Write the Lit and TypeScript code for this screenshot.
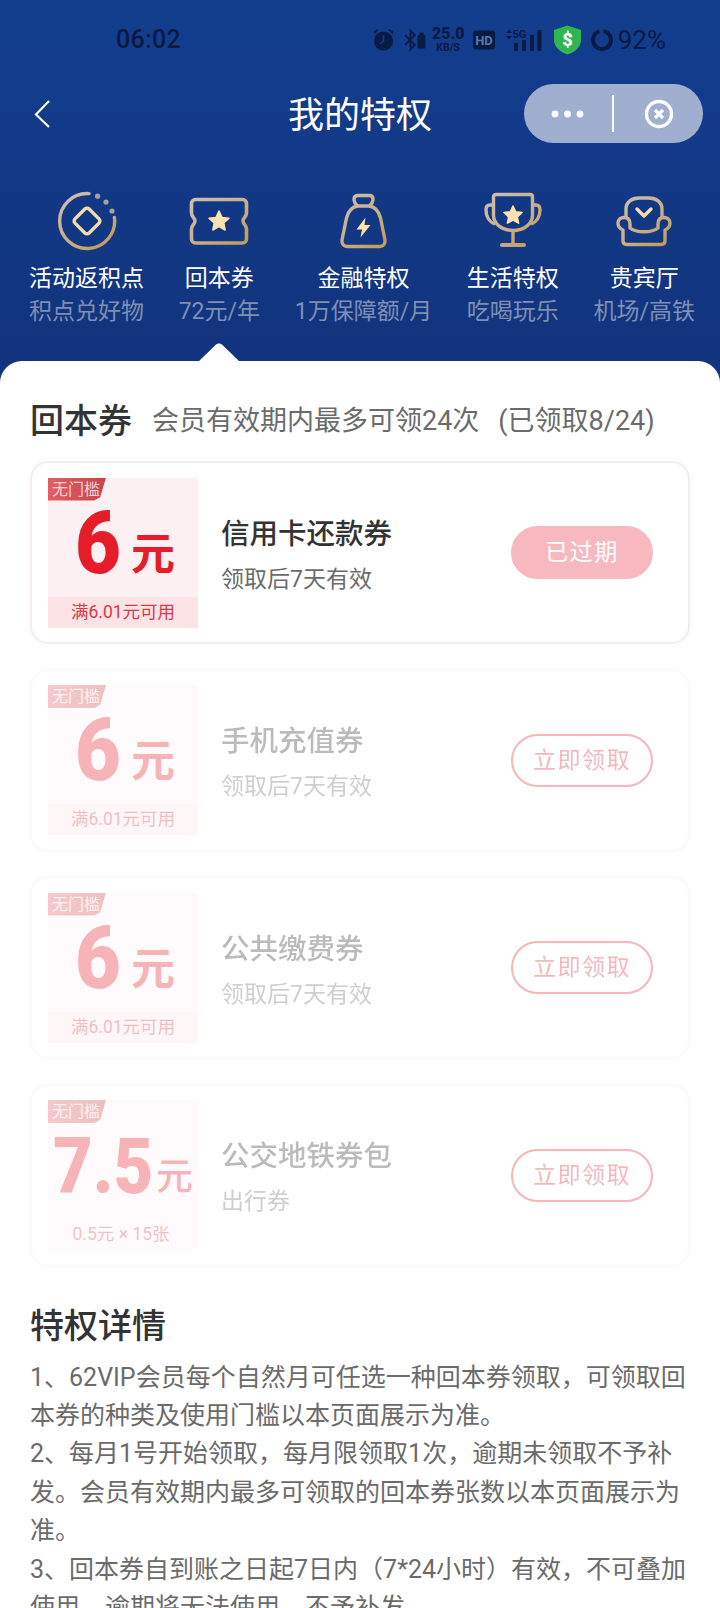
import { LitElement, html, css, svg } from "lit";
import { customElement } from "lit/decorators.js";

const gold = (id: string) => svg`<defs><linearGradient id=${id} gradientUnits="userSpaceOnUse" x1="8" y1="2" x2="50" y2="58"><stop offset="0" stop-color="#cdbfae"/><stop offset="0.55" stop-color="#c9ae8a"/><stop offset="1" stop-color="#c39a58"/></linearGradient></defs>`;
const star = (cx: number, cy: number, r: number) => {
  const pts: string[] = [];
  for (let i = 0; i < 10; i++) {
    const rad = i % 2 ? r * 0.48 : r;
    const a = -Math.PI / 2 + (i * Math.PI) / 5;
    pts.push(`${(cx + rad * Math.cos(a)).toFixed(2)},${(cy + rad * Math.sin(a)).toFixed(2)}`);
  }
  return svg`<polygon points=${pts.join(" ")} fill="#ffe2ae" stroke="#ffe2ae" stroke-width="1.5" stroke-linejoin="round"/>`;
};

const icons = [
  html`<svg class="ic" viewBox="0 0 60 60" fill="none">${gold("g1")}
    <path d="M32 2.6A27.5 27.5 0 1 0 57.4 26.5" stroke="url(#g1)" stroke-width="3.400" stroke-linecap="round"/>
    <circle cx="40.6" cy="5.2" r="2.600" fill="#a99f9b"/><circle cx="49" cy="11" r="2.600" fill="#a99f9b"/><circle cx="55" cy="20" r="2.600" fill="#a99f9b"/>
    <rect x="20" y="20" width="20" height="20" rx="3" transform="rotate(45 30 30)" stroke="#f5dcab" stroke-width="3.400"/></svg>`,
  html`<svg class="ic" viewBox="0 0 60 60" fill="none">${gold("g2")}
    <path d="M6.5 8.5H53.5A4 4 0 0 1 57.5 12.5V22C57.5 26 54 26.500 54 30S57.5 34 57.5 38V48A4 4 0 0 1 53.500 52H6.500A4 4 0 0 1 2.500 48V38C2.500 34 6 33.500 6 30S2.500 26 2.500 22V12.500A4 4 0 0 1 6.500 8.500Z" stroke="url(#g2)" stroke-width="3.600"/>
    ${star(30, 30.5, 10.500)}</svg>`,
  html`<svg class="ic" viewBox="0 0 60 60" fill="none">${gold("g3")}
    <path d="M25 15C22 13 21 11 21 8C21 5 23 4.500 25 4.500H36C38 4.500 40 5 40 8C40 11 39 13 36 15M25 15H36C43 16 46 21 47.500 27L52 49C52.500 53 50 55.500 47 55.500H14C11 55.500 8.500 53 9 49L13.500 27C15 21 18 16 25 15Z" stroke="url(#g3)" stroke-width="3.400" stroke-linejoin="round"/>
    <path d="M32.500 26.500L23.500 38.500H29L27.500 46.500L37.500 34H31.500Z" fill="#ffe2ae"/></svg>`,
  html`<svg class="ic" viewBox="0 0 60 60" fill="none">${gold("g4")}
    <path d="M13 3.500H47C48.500 3.500 49.500 4.500 49.500 6V24C49.500 33 41 39.500 30 39.500S10.500 33 10.500 24V6C10.500 4.500 11.500 3.500 13 3.500Z" stroke="url(#g4)" stroke-width="3.400"/>
    <path d="M10.500 14H7C4 14 3 16 3 19C3 25 6 31 12 33M49.500 14H53C56 14 57 16 57 19C57 25 54 31 48 33M30 39.500V52" stroke="url(#g4)" stroke-width="3.400"/>
    <path d="M19 54H41" stroke="url(#g4)" stroke-width="4" stroke-linecap="round"/>
    ${star(30, 24.500, 9.500)}</svg>`,
  html`<svg class="ic" viewBox="0 0 60 60" fill="none">${gold("g5")}
    <path d="M12 27V18C12 11 18 7 25 7H35C42 7 48 11 48 18V27" stroke="url(#g5)" stroke-width="3.400"/>
    <path d="M9 39C5.500 37.500 4 35 4 32C4 28.500 6.500 26.500 10 26.500C14 26.500 16 29 16 33V37C22 42 38 42 44 37V33C44 29 46 26.500 50 26.500C53.500 26.500 56 28.500 56 32C56 35 54.500 37.500 51 39V50C51 52.500 49.500 53.500 47 53.500H13C10.500 53.500 9 52.500 9 50Z" stroke="url(#g5)" stroke-width="3.400" stroke-linejoin="round"/>
    <path d="M23 18L30 25L37 18" stroke="#f5dcab" stroke-width="3.400" stroke-linecap="round" stroke-linejoin="round"/></svg>`,
];

const tabs = [
  ["活动返积点", "积点兑好物"],
  ["回本券", "72元/年"],
  ["金融特权", "1万保障额/月"],
  ["生活特权", "吃喝玩乐"],
  ["贵宾厅", "机场/高铁"],
];

const cards = [
  { amt: "6", unit: "元", note: "满6.01元可用", title: "信用卡还款券", sub: "领取后7天有效", btn: "已过期", off: false, big: false },
  { amt: "6", unit: "元", note: "满6.01元可用", title: "手机充值券", sub: "领取后7天有效", btn: "立即领取", off: true, big: false },
  { amt: "6", unit: "元", note: "满6.01元可用", title: "公共缴费券", sub: "领取后7天有效", btn: "立即领取", off: true, big: false },
  { amt: "7.5", unit: "元", note: "0.5元 × 15张", title: "公交地铁券包", sub: "出行券", btn: "立即领取", off: true, big: true },
];

@customElement("app-root")
export class AppRoot extends LitElement {
  static styles = css`
    :host { display: block; width: 720px; height: 1608px; overflow: hidden; background: #fff;
      font-family: Roboto, "Noto Sans CJK SC", "Noto Sans", sans-serif; }
    * { box-sizing: border-box; }
    .head { height: 383px; background: linear-gradient(180deg, #123e8e 0%, #12337d 100%); position: relative; }
    .status { height: 79px; display: flex; align-items: center; justify-content: space-between; padding: 0 54px 0 116px; color: #0b1a43; }
    .time { font: 500 25px/30px Roboto, sans-serif; letter-spacing: 0.3px; }
    .sicons { display: flex; align-items: center; gap: 7px; }
    .sicons svg { display: block; }
    .speed { width: 31px; display: flex; flex-direction: column; align-items: center; font-family: Roboto, sans-serif; font-weight: 700; white-space: nowrap; }
    .speed b { font-size: 16px; line-height: 16px; }
    .speed i { font-style: normal; font-size: 10.500px; line-height: 11px; }
    .pct { font: 400 26px/30px Roboto, sans-serif; margin-left: -2px; }
    .nav { margin-top: 5px; height: 59px; display: flex; align-items: center; justify-content: space-between; padding: 0 17px 0 33px; position: relative; }
    .nav h1 { position: absolute; left: 0; right: 0; margin: 0; padding-top: 6px; text-align: center; color: #fff; font-size: 36px; line-height: 59px; font-weight: 400; }
    .pill { width: 179px; height: 59px; border-radius: 30px; background: #a0afcf; display: flex; align-items: center; position: relative; }
    .dots { display: block; margin-left: 27px; }
    .sep { width: 2px; height: 37px; background: #fff; margin-left: 28px; }
    .close { display: block; margin-left: 30px; }
    .tabs { margin-top: 48px; display: flex; gap: 34.700px; padding-left: 29px; }
    .tab { display: flex; flex-direction: column; align-items: center; white-space: nowrap; }
    .ic { width: 60px; height: 60px; display: block; }
    .tab b { font-weight: 400; font-size: 23px; line-height: 32px; color: #fff; margin-top: 12px; }
    .tab span { font-size: 23px; line-height: 34px; color: #7f8fb4; }
    .tip { position: absolute; left: 198px; top: 342px; display: block; }
    .sheet { background: #fff; border-radius: 22px 22px 0 0; margin-top: -22px; padding: 38px 30px 0; position: relative; }
    .sh { display: flex; align-items: center; height: 42px; white-space: nowrap; padding-top: 2px; }
    .sh h2 { margin: 0; font-size: 34px; font-weight: 500; color: #333; line-height: 42px; }
    .sh p { margin: 0 0 0 20px; font-size: 27px; color: #6b6b6b; line-height: 42px; }
    .sh span { margin-left: 19px; }
    .list { margin-top: 20px; display: flex; flex-direction: column; gap: 24.5px; }
    .card { height: 183px; border: 2px solid #f8ebee; border-radius: 18px; padding: 15px 35px 15px 16px; display: flex; align-items: center; }
    .card.off { opacity: 0.33; }
    .block { width: 150px; height: 150px; background: #fdf0f2; position: relative; display: flex; flex-direction: column; flex: none; }
    .tag { position: absolute; left: 0; top: 0; width: 58px; height: 23px; background: linear-gradient(90deg, #e25e63, #c8444b); color: #f9d2d4; font-size: 16px; line-height: 23px; padding-left: 4px; white-space: nowrap; clip-path: polygon(0 0, 100% 0, 90% 86%, 80% 100%, 0 100%); }
    .amt { height: 119px; flex: none; display: flex; align-items: baseline; padding: 27px 0 0 27px; color: #e61c28; white-space: nowrap; }
    .amt b { font: 900 88px/76px Roboto, sans-serif; display: block; width: 46px; transform: scaleX(0.9); transform-origin: left; }
    .amt span { font-size: 44px; font-weight: 700; margin-left: 10px; line-height: 76px; transform: translateY(-3px); }
    .big .amt { padding: 29px 0 0 5px; }
    .big .amt b { font-size: 78px; width: 98px; transform: scaleX(0.88); }
    .big .amt span { font-size: 37px; margin-left: 5px; font-weight: 500; }
    .note { height: 31px; background: #fbe3e6; color: #d73a46; font-size: 17.500px; line-height: 31px; text-align: center; white-space: nowrap; }
    .big .note { background: #fdf0f2; color: #c54c55; font-size: 17.500px; padding-right: 4px; }
    .txt { flex: 1; margin-left: 23px; padding-top: 9px; }
    .txt h3 { margin: 0; font-size: 28.500px; line-height: 40px; font-weight: 500; color: #333; white-space: nowrap; }
    .txt p { margin: 5px 0 0; font-size: 23px; line-height: 40px; color: #6b6b6b; white-space: nowrap; }
    .btn { width: 142px; height: 53px; border-radius: 27px; border: 2px solid #e2222f; color: #e2222f; font-size: 23px; line-height: 49px; text-align: center; flex: none; letter-spacing: 1.500px; white-space: nowrap; }
    .btn.done { background: #f8b8bf; border-color: #f8b8bf; color: #fff; }
    .dt { margin: 36px 0 0; font-size: 34px; line-height: 46px; font-weight: 500; color: #333; }
    .body { margin-top: 10px; font-size: 25px; line-height: 38.400px; color: #6b6b6b; width: 662px; }
    .body p { margin: 0; }
  `;

  render() {
    return html`
      <div class="head">
        <div class="status">
          <div class="time">06:02</div>
          <div class="sicons">
            <svg width="24" height="24" viewBox="0 0 24 24"><circle cx="10.500" cy="13" r="9.600" fill="#0b1a43"/><path d="M1 5L5 1.500M20 5L16 1.500" stroke="#0b1a43" stroke-width="2" fill="none"/><path d="M10.500 7.500V13L7 16" stroke="#123e8e" stroke-width="1.600" fill="none"/></svg>
            <svg width="22" height="24" viewBox="0 0 22 24"><path d="M1 7L11 17L6.500 21.500V2.500L11 7L1 17" stroke="#0b1a43" stroke-width="1.800" fill="none"/><rect x="13.500" y="7" width="8" height="13.500" rx="1.500" fill="#0b1a43"/><rect x="15.500" y="4.500" width="4" height="3" fill="#0b1a43"/></svg>
            <div class="speed"><b>25.0</b><i>KB/S</i></div>
            <svg width="25" height="20" viewBox="0 0 25 20"><rect x="2" y="0.500" width="22" height="19" rx="3" fill="#0b1a43"/><text x="13" y="15" text-anchor="middle" font-family="Roboto, sans-serif" font-weight="700" font-size="13" fill="#5b78b0">HD</text></svg>
            <svg width="39" height="24" viewBox="0 0 39 24"><path d="M3 5L6 1.500L9 5ZM3 8L6 11.500L9 8Z" fill="#0b1a43"/><text x="9.500" y="10" font-family="Roboto, sans-serif" font-weight="700" font-size="11" fill="#0b1a43">5G</text><rect x="11" y="15" width="4" height="8" fill="#0b1a43"/><rect x="19" y="12" width="4" height="11" fill="#0b1a43"/><rect x="27" y="7" width="4" height="16" fill="#0b1a43"/><rect x="34.500" y="2" width="4" height="21" fill="#0b1a43"/></svg>
            <svg width="33" height="30" viewBox="0 0 33 30"><path d="M18.500 0.500L32 5V15C32 22 26 27 18.500 29.500C11 27 5 22 5 15V5Z" fill="#2fb651"/><text x="18.500" y="21" text-anchor="middle" font-family="Roboto, sans-serif" font-weight="900" font-size="18" fill="#fff">$</text></svg>
            <svg width="24" height="24" viewBox="0 0 24 24"><circle cx="13" cy="12" r="9" fill="none" stroke="#0b1a43" stroke-width="4" stroke-dasharray="52 5" transform="rotate(-80 13 12)"/></svg>
            <div class="pct">92%</div>
          </div>
        </div>
        <div class="nav">
          <svg width="18" height="30" viewBox="0 0 18 30" fill="none"><path d="M16 2L3 15.500L16 28" stroke="#fff" stroke-width="2.200"/></svg>
          <h1>我的特权</h1>
          <div class="pill">
            <svg class="dots" width="33" height="8" viewBox="0 0 33 8"><circle cx="4" cy="4" r="3.400" fill="#fff"/><circle cx="16.500" cy="4" r="3.400" fill="#fff"/><circle cx="29" cy="4" r="3.400" fill="#fff"/></svg>
            <div class="sep"></div>
            <svg class="close" width="30" height="30" viewBox="0 0 30 30" fill="none"><circle cx="15" cy="15" r="12.500" stroke="#fff" stroke-width="3.400"/><path d="M11 11L19 19M19 11L11 19" stroke="#fff" stroke-width="3.200"/></svg>
          </div>
        </div>
        <div class="tabs">
          ${tabs.map(
            (t, i) => html`<div class="tab">${icons[i]}<b>${t[0]}</b><span>${t[1]}</span></div>`
          )}
        </div>
        <svg class="tip" width="42" height="20" viewBox="0 0 42 20"><path d="M0 20L17.500 3C19.500 1 22.500 1 24.500 3L42 20Z" fill="#fff"/></svg>
      </div>
      <div class="sheet">
        <div class="sh"><h2>回本券</h2><p>会员有效期内最多可领24次<span>(已领取8/24)</span></p></div>
        <div class="list">
          ${cards.map(
            (c) => html`<div class="card ${c.off ? "off" : ""}">
              <div class="block ${c.big ? "big" : ""}">
                <div class="tag">无门槛</div>
                <div class="amt"><b>${c.amt}</b><span>${c.unit}</span></div>
                <div class="note">${c.note}</div>
              </div>
              <div class="txt"><h3>${c.title}</h3><p>${c.sub}</p></div>
              <div class="btn ${c.off ? "" : "done"}">${c.btn}</div>
            </div>`
          )}
        </div>
        <h2 class="dt">特权详情</h2>
        <div class="body">
          <p>1、62VIP会员每个自然月可任选一种回本券领取，可领取回本券的种类及使用门槛以本页面展示为准。</p>
          <p>2、每月1号开始领取，每月限领取1次，逾期未领取不予补发。会员有效期内最多可领取的回本券张数以本页面展示为准。</p>
          <p>3、回本券自到账之日起7日内（7*24小时）有效，不可叠加使用，逾期将无法使用，不予补发。</p>
        </div>
      </div>
    `;
  }
}
